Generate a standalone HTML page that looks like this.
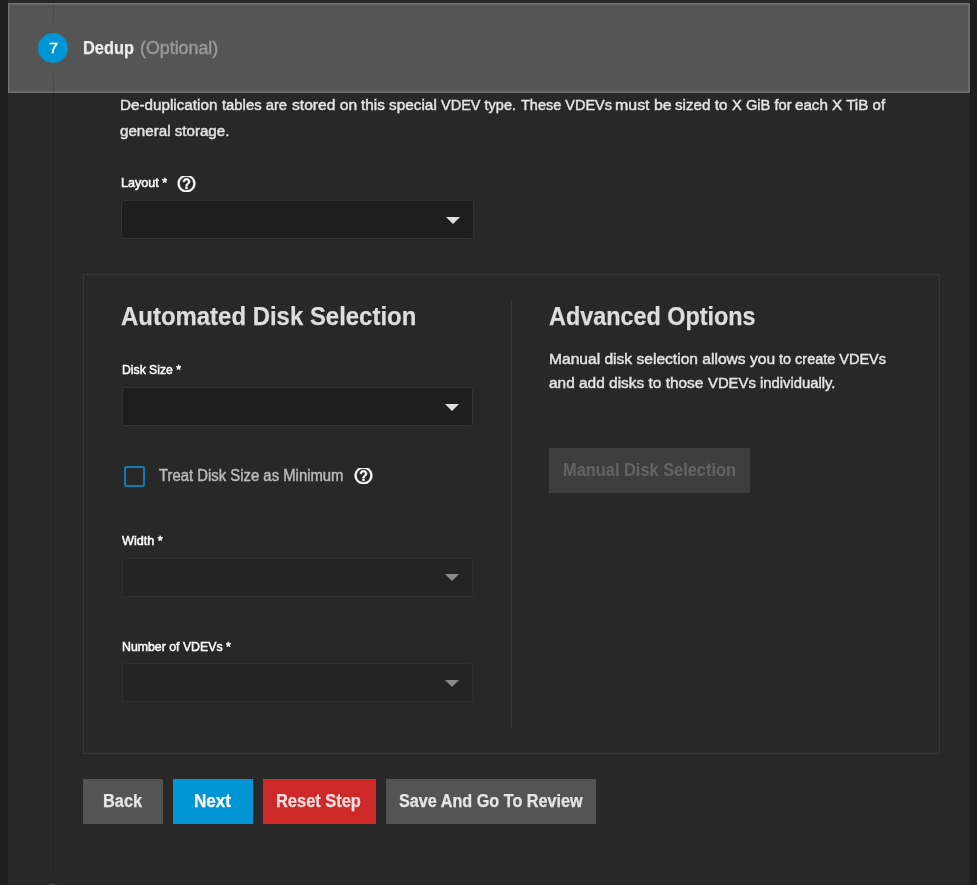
<!DOCTYPE html>
<html>
<head>
<meta charset="utf-8">
<title>Dedup</title>
<style>
  html, body { margin: 0; padding: 0; }
  body {
    width: 977px; height: 885px; overflow: hidden; position: relative;
    background: #1e1e1e;
    font-family: "Liberation Sans", sans-serif;
    color: #e2e2e2;
  }
  .abs { position: absolute; }
  .card { left: 8px; top: 0; width: 962px; height: 885px; background: #282828; }
  .vline { left: 53px; width: 1px; background: #232323; }
  .header {
    left: 8px; top: 3px; width: 962px; height: 90px; box-sizing: border-box;
    background: #555555; border: 1px solid; border-color: #747474 #6c6c6c #6c6c6c #747474;
    box-shadow: inset 1px 1px 0 0 #626262, inset -1px -1px 0 0 #696969;
  }
  .hline { left: 53px; width: 1px; background: #4b4b4b; }
  .stepicon {
    left: 38px; top: 33px; width: 30px; height: 30px; border-radius: 50%;
    background: #0095d5; color: #fff; font-size: 15px; line-height: 30px; text-align: center;
  }
  .t { position: absolute; white-space: nowrap; transform-origin: 0 0; line-height: 1; }
  .b { font-weight: bold; }
  .sel {
    box-sizing: border-box; height: 38.75px; background: #1e1e1e;
    border: 1px solid #333333; border-radius: 2.5px;
  }
  .sel.dis { background: #242424; border-color: #2f2f2f; }
  .arrow { width: 0; height: 0; border-left: 7.1px solid transparent; border-right: 7.1px solid transparent; border-top: 7.1px solid #e0e0e0; }
  .arrow.dis { border-top-color: #8a8a8a; }
  .panel { left: 83px; top: 274px; width: 857px; height: 480px; box-sizing: border-box; border: 1px solid #363636; }
  .divider { left: 511px; top: 300px; width: 1px; height: 428px; background: #393939; }
  .btn { top: 779px; height: 45px; }
  .cb { left: 124px; top: 466px; width: 20.5px; height: 20.5px; box-sizing: border-box; border: 2.5px solid #0f7db1; border-radius: 2.5px; }
</style>
</head>
<body>
<div id="L" style="position:absolute;left:0;top:0;width:977px;height:885px;overflow:hidden;will-change:transform">
  <div class="abs card"></div>
  <div class="abs vline" style="top:0;height:874px"></div>

  <div class="abs" style="left:38px;top:884px;width:30px;height:30px;border-radius:50%;background:#4c4c4c"></div>
  <div class="abs header"></div>
  <div class="abs hline" style="top:5px;height:18px"></div>
  <div class="abs hline" style="top:73px;height:19px"></div>
  <div class="abs stepicon"></div>
  <span class="t" id="t_seven" style="left:48.8px;top:40.00px;font-size:15.5px;color:#ffffff;-webkit-text-stroke:0.35px #ffffff;transform:scaleX(1.0667)">7</span>

  <span class="t b" id="t_dedup" style="left:83.4px;top:40.00px;font-size:17.5px;color:#ebebeb;-webkit-text-stroke:0.25px #ebebeb;transform:scaleX(0.9347)">Dedup</span>
  <span class="t" id="t_opt" style="left:140.2px;top:40.00px;font-size:17.5px;color:#9a9a9a;-webkit-text-stroke:0.45px #9a9a9a;transform:scaleX(1.0176)">(Optional)</span>

  <span class="t" id="t_p1a" style="left:120.39999999999999px;top:97.00px;font-size:15.4px;color:#e4e4e4;-webkit-text-stroke:0.45px #e4e4e4;transform:scaleX(0.9899)">De-duplication</span><span class="t" id="t_p1b" style="left:221.8px;top:97.00px;font-size:15.4px;color:#e4e4e4;-webkit-text-stroke:0.45px #e4e4e4;transform:scaleX(0.9631)">tables are</span><span class="t" id="t_p1c" style="left:291.5px;top:97.00px;font-size:15.4px;color:#e4e4e4;-webkit-text-stroke:0.45px #e4e4e4;transform:scaleX(1.0145)">stored on</span><span class="t" id="t_p1d" style="left:360.5px;top:97.00px;font-size:15.4px;color:#e4e4e4;-webkit-text-stroke:0.45px #e4e4e4;transform:scaleX(0.9955)">this special</span><span class="t" id="t_p1e" style="left:440.8px;top:97.00px;font-size:15.4px;color:#e4e4e4;-webkit-text-stroke:0.45px #e4e4e4;transform:scaleX(0.9427)">VDEV type.</span><span class="t" id="t_p1f" style="left:520.5999999999999px;top:97.00px;font-size:15.4px;color:#e4e4e4;-webkit-text-stroke:0.45px #e4e4e4;transform:scaleX(0.9413)">These VDEVs</span><span class="t" id="t_p1g" style="left:615.0999999999999px;top:97.00px;font-size:15.4px;color:#e4e4e4;-webkit-text-stroke:0.45px #e4e4e4;transform:scaleX(1.0356)">must be</span><span class="t" id="t_p1h" style="left:675.1999999999999px;top:97.00px;font-size:15.4px;color:#e4e4e4;-webkit-text-stroke:0.45px #e4e4e4;transform:scaleX(0.9897)">sized to</span><span class="t" id="t_p1i" style="left:731.5999999999999px;top:97.00px;font-size:15.4px;color:#e4e4e4;-webkit-text-stroke:0.45px #e4e4e4;transform:scaleX(0.9562)">X GiB for</span><span class="t" id="t_p1j" style="left:795.0px;top:97.00px;font-size:15.4px;color:#e4e4e4;-webkit-text-stroke:0.45px #e4e4e4;transform:scaleX(0.9853)">each X TiB of</span>
  <span class="t" id="t_p2" style="left:119.8px;top:123.00px;font-size:15.4px;color:#e4e4e4;-webkit-text-stroke:0.45px #e4e4e4;transform:scaleX(0.9835)">general storage.</span>

  <span class="t" id="t_layout" style="left:121.0px;top:176.00px;font-size:13.5px;color:#fafafa;-webkit-text-stroke:0.55px #fafafa;transform:scaleX(0.9304)">Layout *</span>
  <div class="abs" style="left:176.00px;top:175.79px;width:21.0px;height:16.25px;overflow:hidden"><svg style="position:absolute;left:0;top:-2.38px" width="21.0" height="21.0" viewBox="0 0 24 24"><path fill="#ffffff" stroke="#ffffff" stroke-width="0.7" d="M11 18h2v-2h-2v2zm1-16C6.48 2 2 6.48 2 12s4.48 10 10 10 10-4.48 10-10S17.52 2 12 2zm0 18c-4.41 0-8-3.59-8-8s3.59-8 8-8 8 3.59 8 8-3.59 8-8 8zm0-14c-2.21 0-4 1.79-4 4h2c0-1.1.9-2 2-2s2 .9 2 2c0 2-3 1.75-3 5h2c0-2.25 3-2.5 3-5 0-2.21-1.79-4-4-4z"/></svg></div>
  <div class="abs sel" style="left:120.75px;top:200px;width:353px"></div>
  <div class="abs arrow" style="left:445.9px;top:216.7px"></div>

  <div class="abs panel"></div>
  <div class="abs divider"></div>

  <span class="t b" id="t_auto" style="left:121.0px;top:304.00px;font-size:25.4px;color:#dddddd;-webkit-text-stroke:0.25px #dddddd;transform:scaleX(0.9428)">Automated Disk Selection</span>
  <span class="t" id="t_disksize" style="left:121.8px;top:363.00px;font-size:13.5px;color:#fafafa;-webkit-text-stroke:0.55px #fafafa;transform:scaleX(0.9040)">Disk Size *</span>
  <div class="abs sel" style="left:121.5px;top:387px;width:351px"></div>
  <div class="abs arrow" style="left:444.9px;top:403.7px"></div>

  <div class="abs cb"></div>
  <span class="t" id="t_treat" style="left:158.7px;top:468.00px;font-size:15.6px;color:#b9b9b9;-webkit-text-stroke:0.45px #b9b9b9;transform:scaleX(0.9534)">Treat Disk Size as Minimum</span>
  <div class="abs" style="left:353.00px;top:467.80px;width:21.0px;height:16.25px;overflow:hidden"><svg style="position:absolute;left:0;top:-2.38px" width="21.0" height="21.0" viewBox="0 0 24 24"><path fill="#ffffff" stroke="#ffffff" stroke-width="0.7" d="M11 18h2v-2h-2v2zm1-16C6.48 2 2 6.48 2 12s4.48 10 10 10 10-4.48 10-10S17.52 2 12 2zm0 18c-4.41 0-8-3.59-8-8s3.59-8 8-8 8 3.59 8 8-3.59 8-8 8zm0-14c-2.21 0-4 1.79-4 4h2c0-1.1.9-2 2-2s2 .9 2 2c0 2-3 1.75-3 5h2c0-2.25 3-2.5 3-5 0-2.21-1.79-4-4-4z"/></svg></div>

  <span class="t" id="t_width" style="left:121.6px;top:534.00px;font-size:13.5px;color:#fafafa;-webkit-text-stroke:0.55px #fafafa;transform:scaleX(0.9353)">Width *</span>
  <div class="abs sel dis" style="left:121.5px;top:558px;width:351px"></div>
  <div class="abs arrow dis" style="left:444.9px;top:574px"></div>

  <span class="t" id="t_num" style="left:121.5px;top:640.00px;font-size:13.5px;color:#fafafa;-webkit-text-stroke:0.55px #fafafa;transform:scaleX(0.9120)">Number of VDEVs *</span>
  <div class="abs sel dis" style="left:121.5px;top:663px;width:351px;height:39.3px"></div>
  <div class="abs arrow dis" style="left:444.9px;top:679.5px"></div>

  <span class="t b" id="t_adv" style="left:548.8px;top:304.00px;font-size:25.4px;color:#dddddd;-webkit-text-stroke:0.25px #dddddd;transform:scaleX(0.9210)">Advanced Options</span>
  <span class="t" id="t_m1a" style="left:548.5px;top:351.00px;font-size:15.5px;color:#e4e4e4;-webkit-text-stroke:0.45px #e4e4e4;transform:scaleX(1.0054)">Manual disk selection allows you</span><span class="t" id="t_m1b" style="left:779.4px;top:351.00px;font-size:15.5px;color:#e4e4e4;-webkit-text-stroke:0.45px #e4e4e4;transform:scaleX(0.9330)">to create VDEVs</span>
  <span class="t" id="t_m2a" style="left:548.5px;top:375.00px;font-size:15.5px;color:#e4e4e4;-webkit-text-stroke:0.45px #e4e4e4;transform:scaleX(0.9954)">and add disks to those</span><span class="t" id="t_m2b" style="left:707.7px;top:375.00px;font-size:15.5px;color:#e4e4e4;-webkit-text-stroke:0.45px #e4e4e4;transform:scaleX(0.9568)">VDEVs individually.</span>

  <div class="abs" style="left:549px;top:448px;width:201px;height:45px;background:#3e3e3e"></div>
  <span class="t b" id="t_mds" style="left:563.3px;top:462.00px;font-size:17.6px;color:#646464;transform:scaleX(0.9313)">Manual Disk Selection</span>

  <div class="abs btn" style="left:83px;width:80px;background:#545454"></div>
  <div class="abs btn" style="left:173px;width:80px;background:#0095d5"></div>
  <div class="abs btn" style="left:263px;width:113px;background:#ce2929"></div>
  <div class="abs btn" style="left:386px;width:210px;background:#545454"></div>
  <span class="t b" id="t_back" style="left:102.8px;top:793.00px;font-size:17.5px;color:#e6e6e6;-webkit-text-stroke:0.25px #e6e6e6;transform:scaleX(0.9368)">Back</span>
  <span class="t b" id="t_next" style="left:193.5px;top:793.00px;font-size:17.5px;color:#ffffff;-webkit-text-stroke:0.25px #ffffff;transform:scaleX(0.9753)">Next</span>
  <span class="t b" id="t_reset" style="left:276.0px;top:793.00px;font-size:17.5px;color:#f8dede;-webkit-text-stroke:0.25px #f8dede;transform:scaleX(0.9386)">Reset Step</span>
  <span class="t b" id="t_save" style="left:398.6px;top:793.00px;font-size:17.5px;color:#e6e6e6;-webkit-text-stroke:0.25px #e6e6e6;transform:scaleX(0.9254)">Save And Go To Review</span>
</div>
</body>
</html>
